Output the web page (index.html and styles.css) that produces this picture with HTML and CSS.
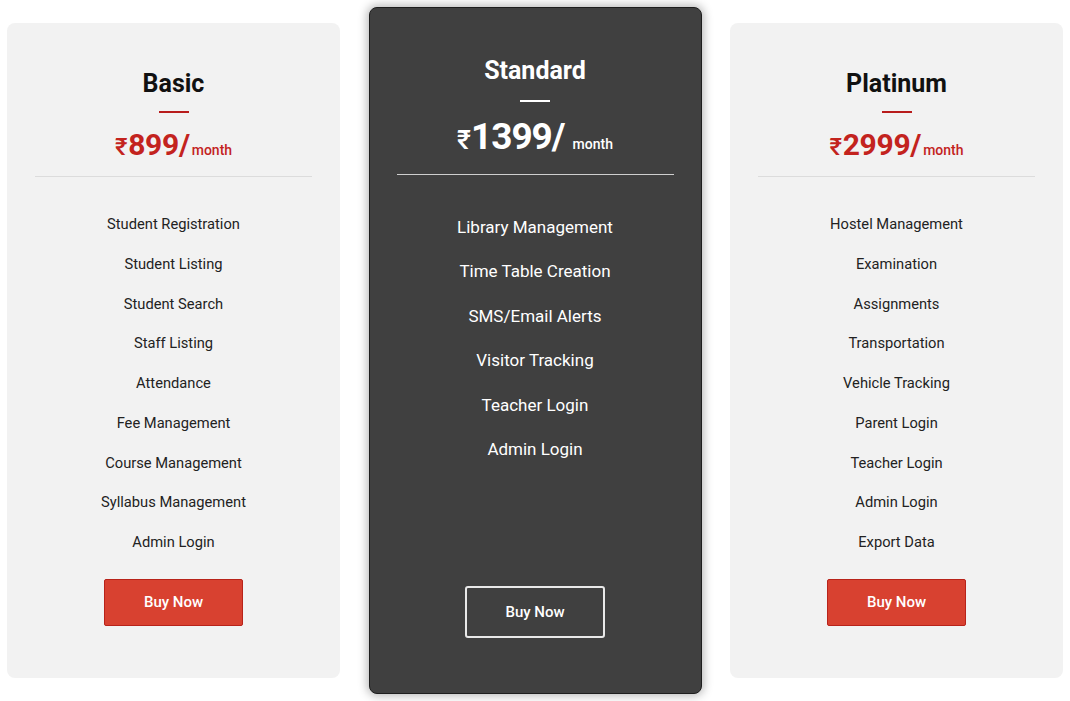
FILE: index.html
```html
<!DOCTYPE html>
<html>
<head>
<meta charset="utf-8">
<link rel="stylesheet" href="styles.css">
</head>
<body>
<div class="plans">
  <div class="card side">
    <h2 class="title">Basic</h2>
    <div class="bar"></div>
    <div class="price"><span class="amt"><span class="cur">₹</span>899/</span><span class="per">month</span></div>
    <hr class="rule">
    <ul class="features">
      <li>Student Registration</li>
      <li>Student Listing</li>
      <li>Student Search</li>
      <li>Staff Listing</li>
      <li>Attendance</li>
      <li>Fee Management</li>
      <li>Course Management</li>
      <li>Syllabus Management</li>
      <li>Admin Login</li>
    </ul>
    <a class="btn" href="#">Buy Now</a>
  </div>
  <div class="card featured">
    <h2 class="title">Standard</h2>
    <div class="bar"></div>
    <div class="price"><span class="amt"><span class="cur">₹</span>1399/</span><span class="per">month</span></div>
    <hr class="rule">
    <ul class="features">
      <li>Library Management</li>
      <li>Time Table Creation</li>
      <li>SMS/Email Alerts</li>
      <li>Visitor Tracking</li>
      <li>Teacher Login</li>
      <li>Admin Login</li>
    </ul>
    <a class="btn" href="#">Buy Now</a>
  </div>
  <div class="card side">
    <h2 class="title">Platinum</h2>
    <div class="bar"></div>
    <div class="price"><span class="amt"><span class="cur">₹</span>2999/</span><span class="per">month</span></div>
    <hr class="rule">
    <ul class="features">
      <li>Hostel Management</li>
      <li>Examination</li>
      <li>Assignments</li>
      <li>Transportation</li>
      <li>Vehicle Tracking</li>
      <li>Parent Login</li>
      <li>Teacher Login</li>
      <li>Admin Login</li>
      <li>Export Data</li>
    </ul>
    <a class="btn" href="#">Buy Now</a>
  </div>
</div>
</body>
</html>
```

FILE: styles.css
```css
* { box-sizing: border-box; }
html, body { margin: 0; background: #fff; }
body { font-family: Roboto, "DejaVu Sans", sans-serif; }

.plans {
  display: flex;
  align-items: stretch;
  gap: 28.5px;
  padding: 7px 7px;
}

.card {
  flex: 0 0 333px;
  display: flex;
  flex-direction: column;
  align-items: center;
  border-radius: 8px;
  text-align: center;
}

.side {
  background: #f2f2f2;
  margin: 16px 0;
  padding: 46px 28px 52px;
  color: #222;
}

.featured {
  background: #404040;
  border: 1px solid #1e1e1e;
  box-shadow: 0 0 10px 2px rgba(0,0,0,0.28);
  padding: 48px 27px 55px;
  color: #fff;
}

.title {
  margin: 0;
  font-size: 25px;
  line-height: 30px;
  font-weight: 700;
  color: #111;
}
.featured .title { color: #fff; }

.bar {
  width: 30px;
  height: 2px;
  background: #b81c1c;
  margin-top: 12px;
}
.featured .bar { background: #fff; margin-top: 14px; }

.price {
  margin-top: 12px;
  color: #c3231e;
  font-weight: 700;
  white-space: nowrap;
}
.side .price { height: 40px; }
.price .amt { font-size: 30px; line-height: 40px; letter-spacing: -0.3px; }
.price .cur { font-size: 0.8em; font-weight: 500; margin-right: 1px; }
.price .per { font-size: 14px; font-weight: 500; margin-left: 2px; }
.featured .price { color: #fff; height: 52px; margin-top: 9px; }
.featured .price .amt { font-size: 37px; line-height: 52px; letter-spacing: -1px; }
.featured .price .cur { font-size: 0.72em; }
.featured .price .per { margin-left: 8px; }

.rule {
  align-self: stretch;
  border: 0;
  height: 1px;
  background: #dcdcdc;
  margin: 11px 0 0;
}
.featured .rule { background: #cfcfcf; margin-top: 11px; }

.features {
  list-style: none;
  margin: 28px 0 0;
  padding: 0;
}
.features li {
  font-size: 14.7px;
  line-height: 39.75px;
  height: 39.75px;
}
.featured .features { margin-top: 30px; }
.featured .features li {
  font-size: 17px;
  line-height: 44.4px;
  height: 44.4px;
}

.btn {
  display: block;
  text-decoration: none;
  font-weight: 500;
  font-size: 15px;
}
.side .btn {
  margin-top: 16px;
  width: 139px;
  height: 47px;
  line-height: 45px;
  background: #d84130;
  border: 1px solid #b8231a;
  border-radius: 2px;
  color: #fff;
}
.featured .btn {
  margin-top: auto;
  width: 140px;
  height: 52px;
  line-height: 48px;
  border: 2px solid #e8e8e8;
  border-radius: 3px;
  color: #fff;
}
```
